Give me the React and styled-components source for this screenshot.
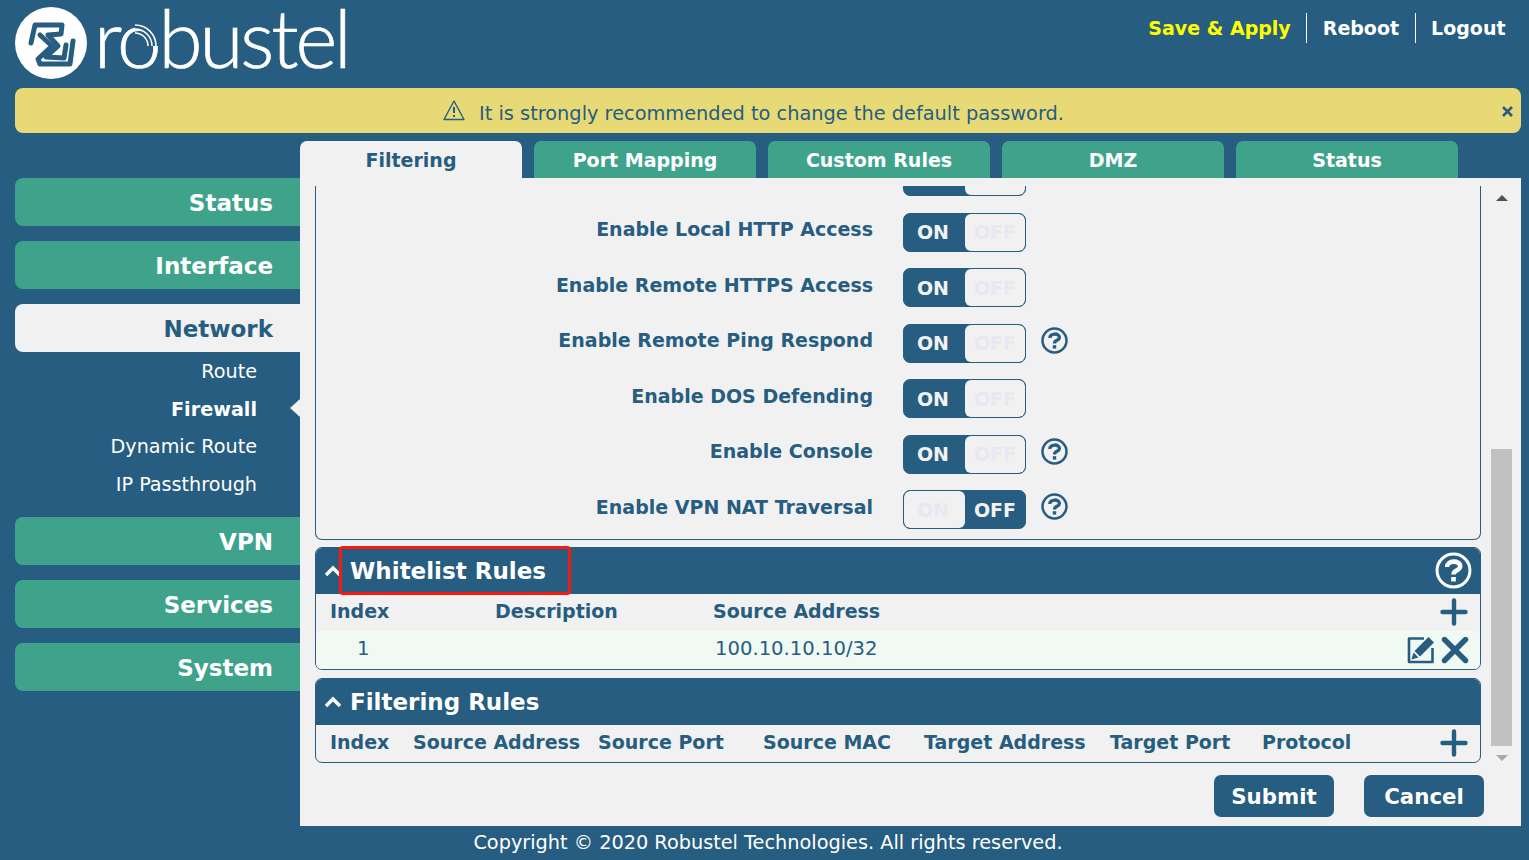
import React from 'react';
import styled, { createGlobalStyle } from 'styled-components';

const BLUE = '#265d80';
const TEAL = '#3fa38c';
const LIGHT = '#f1f1f1';

const GlobalStyle = createGlobalStyle`
  html, body {
    margin: 0;
    padding: 0;
    height: 100%;
    background: ${BLUE};
    font-family: "DejaVu Sans", Verdana, sans-serif;
    overflow: hidden;
  }
  * { box-sizing: border-box; }
`;

const Page = styled.div`
  width: 1529px;
  height: 860px;
  background: ${BLUE};
  display: flex;
  flex-direction: column;
  padding-left: 15px;
  padding-right: 8px;
`;

const Header = styled.header`
  height: 88px;
  display: flex;
  align-items: flex-start;
  justify-content: space-between;
`;

const Logo = styled.div`
  display: flex;
  align-items: flex-start;
  padding-top: 7px;
`;

const LogoWord = styled.div`
  position: relative;
  margin-left: 5px;
  margin-top: -18px;
  height: 88px;
  font-family: Lato, sans-serif;
  font-weight: 300;
  font-size: 80px;
  line-height: 96px;
  color: #fff;
  letter-spacing: -3.1px;
  -webkit-text-stroke: 0.7px #fff;
`;

const LogoWaves = styled.svg`
  position: absolute;
  left: 29px;
  top: 32px;
`;

const HeaderLinks = styled.nav`
  display: flex;
  align-items: center;
  margin-top: 13px;
`;

const HeaderLink = styled.a`
  height: 30px;
  line-height: 31px;
  padding: 0 15.5px;
  font-size: 19px;
  font-weight: 700;
  color: ${p => (p.$save ? '#ffff00' : '#fff')};
  border-left: ${p => (p.$save ? 'none' : '1px solid #fff')};
`;

const Banner = styled.div`
  position: relative;
  height: 45px;
  background: #e7da76;
  border-radius: 8px;
  display: flex;
  align-items: center;
  justify-content: center;
  gap: 14px;
  padding-top: 5px;
  padding-right: 29px;
  color: ${BLUE};
  font-size: 19.35px;
`;

const BannerIcon = styled.span`
  display: flex;
  margin-top: -6px;
`;

const BannerClose = styled.span`
  position: absolute;
  right: 7px;
  top: 17px;
  width: 13px;
  height: 13px;
  display: flex;
`;

const Tabs = styled.div`
  display: flex;
  gap: 12px;
  margin-top: 8px;
  padding-left: 285px;
`;

const Tab = styled.div`
  width: 222px;
  height: 37px;
  line-height: 38px;
  border-radius: 7px 7px 0 0;
  text-align: center;
  font-size: 19px;
  font-weight: 700;
  background: ${p => (p.$active ? LIGHT : TEAL)};
  color: ${p => (p.$active ? BLUE : '#fff')};
`;

const Body = styled.div`
  display: flex;
  height: 648px;
`;

const Sidebar = styled.aside`
  width: 285px;
  display: flex;
  flex-direction: column;
  gap: 15px;
`;

const MenuItem = styled.div`
  height: 48px;
  line-height: 51px;
  padding-right: 27px;
  text-align: right;
  border-radius: 8px 0 0 8px;
  font-size: 23px;
  font-weight: 700;
  background: ${p => (p.$active ? LIGHT : TEAL)};
  color: ${p => (p.$active ? BLUE : '#fff')};
`;

const SubMenu = styled.div`
  margin-top: -15px;
`;

const SubItem = styled.div`
  position: relative;
  height: 37.5px;
  line-height: 39px;
  padding-right: 43px;
  text-align: right;
  font-size: 19.2px;
  color: #fff;
  font-weight: ${p => (p.$active ? 700 : 400)};

  ${p => p.$active && `
    &::after {
      content: '';
      position: absolute;
      right: 0;
      top: 9px;
      border-style: solid;
      border-width: 9px 10px 9px 0;
      border-color: transparent ${LIGHT} transparent transparent;
    }
  `}
`;

const Content = styled.main`
  flex: 1;
  background: ${LIGHT};
  padding: 8px 9px 0 15px;
  display: flex;
  flex-direction: column;
`;

const ScrollRow = styled.div`
  display: flex;
  height: 585px;
`;

const Panels = styled.div`
  width: 1166px;
  overflow: hidden;
  display: flex;
  flex-direction: column;
  gap: 7px;
`;

const SettingsPanel = styled.section`
  flex: none;
  margin-top: -37px;
  padding-bottom: 1px;
  border: 1px solid ${BLUE};
  border-top: none;
  border-radius: 0 0 7px 7px;
`;

const Setting = styled.div`
  height: 55.5px;
  display: grid;
  grid-template-columns: 557px 123px 1fr;
  column-gap: 30px;
  align-items: center;
`;

const SettingLabel = styled.div`
  text-align: right;
  font-size: 19px;
  font-weight: 700;
  color: ${BLUE};
  margin-top: -6px;
`;

const Toggle = styled.div`
  width: 123px;
  height: 39px;
  display: flex;
  border: 1px solid ${BLUE};
  border-radius: 7px;
  background: ${BLUE};
  overflow: hidden;
  font-size: 19px;
  font-weight: 700;
`;

const ToggleSide = styled.div`
  height: 100%;
  display: flex;
  align-items: center;
  justify-content: center;
  flex: ${p => (p.$wide ? '0 0 61px' : '1')};
  padding-right: ${p => (p.$wide ? 3 : 0)}px;
  color: ${p => (p.$lit ? LIGHT : '#e8e8f3')};
  background: ${p => (p.$lit ? BLUE : LIGHT)};
  border-radius: ${p => (p.$lit ? '0' : '6px')};
`;

const HelpWrap = styled.div`
  margin-left: -15px;
  height: 27px;
  margin-top: -6px;
  display: flex;
`;

const Card = styled.section`
  flex: none;
  border: 1px solid ${BLUE};
  border-radius: 7px;
  overflow: hidden;
`;

const CardWrap = styled.div`
  position: relative;
  flex: none;
  margin-top: ${p => p.$mt || 0}px;
`;

const Highlight = styled.div`
  position: absolute;
  left: 24px;
  top: -1px;
  width: 232px;
  height: 49px;
  border: 3px solid #f5190f;
  border-radius: 4px;
`;

const CardHead = styled.div`
  height: 46px;
  display: flex;
  align-items: center;
  padding: 0 8px 0 8px;
  background: ${BLUE};
  color: #fff;
  font-size: 23px;
  font-weight: 700;
`;

const CardTitle = styled.span`
  flex: 1;
  margin-left: 8px;
`;

const TableRow = styled.div`
  display: grid;
  grid-template-columns: ${p => p.$cols};
  align-items: center;
  height: ${p => (p.$data ? 38 : 37)}px;
  padding-left: 14px;
  padding-right: 11px;
  color: ${BLUE};
  font-size: ${p => (p.$data ? '19.6px' : '19px')};
  font-weight: ${p => (p.$data ? 400 : 700)};
  background: ${p => (p.$data ? '#f1f9f3' : 'transparent')};
  border-radius: ${p => (p.$data ? '6px 6px 0 0' : '0')};
`;

const HeadCell = styled.span`
  margin-bottom: 3px;
`;

const IndexCell = styled.span`
  padding-left: 27px;
  margin-bottom: 2px;
`;

const AddressCell = styled.span`
  padding-left: 2px;
  margin-bottom: 2px;
`;

const RowIcons = styled.span`
  display: flex;
  justify-content: flex-end;
  align-items: center;
  gap: 6px;
  margin-right: ${p => (p.$add ? 1 : 0)}px;
`;

const Scrollbar = styled.div`
  width: 21px;
  margin-left: 10px;
  display: flex;
  flex-direction: column;
  align-items: center;
`;

const ScrollTrack = styled.div`
  flex: 1;
  width: 100%;
  padding-top: 238px;
`;

const ScrollThumb = styled.div`
  width: 100%;
  height: 297px;
  background: #c1c1c1;
`;

const ScrollArrow = styled.div`
  flex: none;
  height: 25px;
  display: flex;
  align-items: center;
  justify-content: center;

  &::before {
    content: '';
    border-left: 6px solid transparent;
    border-right: 6px solid transparent;
    ${p => (p.$down
      ? 'border-top: 6px solid #a8a8a8; margin-bottom: 2px;'
      : 'border-bottom: 6px solid #505050; margin-bottom: 1px;')}
  }
`;

const Actions = styled.div`
  display: flex;
  justify-content: flex-end;
  gap: 30px;
  margin-top: 4px;
  margin-right: 28px;
`;

const Button = styled.button`
  width: 120px;
  height: 42px;
  border: none;
  border-radius: 7px;
  background: ${BLUE};
  color: #fff;
  font-family: inherit;
  font-size: 21.3px;
  font-weight: 700;
  padding: 0;
`;

const Footer = styled.footer`
  flex: 1;
  text-align: center;
  color: #fff;
  font-size: 19.3px;
  line-height: 33px;
`;

const LogoMark = () => (
  <svg width="74" height="74" viewBox="0 0 74 74">
    <circle cx="36" cy="36" r="36" fill="#fff" />
    <g fill="none" stroke={BLUE} strokeWidth="5" strokeLinejoin="round" strokeLinecap="round">
      <path d="M16 36 L20 18 L47 18 L46 27 L33 28 L43 39 L31 50 L49 51 L51 38" />
      <path d="M58 34 L55 57 L25 57 L23 52 L37 39 L25 28" />
    </g>
  </svg>
);

const WarningIcon = () => (
  <svg width="22" height="22" viewBox="0 0 22 22" fill="none" stroke={BLUE}>
    <path d="M11 2 L21 20.5 H1 Z" strokeWidth="1.4" strokeLinejoin="round" />
    <path d="M11 8 V14" strokeWidth="2" />
    <path d="M11 16 V18" strokeWidth="2" />
  </svg>
);

const CloseSmall = () => (
  <svg width="13" height="13" viewBox="0 0 13 13" stroke={BLUE} strokeWidth="2.6">
    <path d="M2 2 L11 11 M11 2 L2 11" />
  </svg>
);

const HelpIcon = ({ size = 27, color = BLUE, weight = 2.5 }) => (
  <svg width={size} height={size} viewBox="0 0 27 27" fill="none" stroke={color}>
    <circle cx="13.5" cy="13.5" r="12" strokeWidth={weight} />
    <path d="M8.8 11 C8.8 5.8 18.4 5.8 18.4 10.4 C18.4 13.6 13.5 13 13.5 16.4" strokeWidth="3.3" />
    <path d="M13.5 18.2 V21.6" strokeWidth="3.4" />
  </svg>
);

const Chevron = () => (
  <svg width="18" height="12" viewBox="0 0 18 12" fill="none" stroke="#fff" strokeWidth="3.4">
    <path d="M2 10 L9 3 L16 10" />
  </svg>
);

const PlusIcon = () => (
  <svg width="28" height="28" viewBox="0 0 28 28" stroke={BLUE} strokeWidth="4.4" strokeLinecap="round">
    <path d="M14 2.5 V25.5 M2.5 14 H25.5" />
  </svg>
);

const EditIcon = () => (
  <svg width="28" height="28" viewBox="0 0 28 28" fill="none">
    <path d="M17 2.5 H2 V26 H25.5 V12" stroke={BLUE} strokeWidth="2.6" strokeLinejoin="round" />
    <path d="M21.5 1 L27 6.5 L13 20.5 L7.5 15 Z" fill={BLUE} />
    <path d="M6.5 16.5 L11.5 21.5 L4.5 23.5 Z" fill={BLUE} />
  </svg>
);

const CrossIcon = () => (
  <svg width="28" height="28" viewBox="0 0 28 28" stroke={BLUE} strokeWidth="5.4" strokeLinecap="round">
    <path d="M3.5 3.5 L24.5 24.5 M24.5 3.5 L3.5 24.5" />
  </svg>
);

const settings = [
  { label: 'Enable Local HTTPS Access', on: true },
  { label: 'Enable Local HTTP Access', on: true },
  { label: 'Enable Remote HTTPS Access', on: true },
  { label: 'Enable Remote Ping Respond', on: true, help: true },
  { label: 'Enable DOS Defending', on: true },
  { label: 'Enable Console', on: true, help: true },
  { label: 'Enable VPN NAT Traversal', on: false, help: true },
];

const WHITELIST_COLS = '165px 218px 1fr 72px';
const FILTER_COLS = '83px 185px 165px 161px 186px 152px 1fr 40px';

const App = () => (
  <Page>
    <GlobalStyle />
    <Header>
      <Logo>
        <LogoMark />
        <LogoWord>
          robustel
          <LogoWaves width="38" height="34" viewBox="0 0 38 34" fill="none" strokeWidth="1.5">
            <path d="M12 4 A21 21 0 0 1 33 25" stroke={BLUE} strokeWidth="8" />
            <path d="M12 4 A21 21 0 0 1 33 25" stroke="#fff" />
            <path d="M12 8 A17 17 0 0 1 29 25" stroke="#fff" />
            <path d="M12 12 A13 13 0 0 1 25 25" stroke="#fff" />
          </LogoWaves>
        </LogoWord>
      </Logo>
      <HeaderLinks>
        <HeaderLink $save>Save &amp; Apply</HeaderLink>
        <HeaderLink>Reboot</HeaderLink>
        <HeaderLink>Logout</HeaderLink>
      </HeaderLinks>
    </Header>

    <Banner>
      <BannerIcon><WarningIcon /></BannerIcon>
      It is strongly recommended to change the default password.
      <BannerClose><CloseSmall /></BannerClose>
    </Banner>

    <Tabs>
      <Tab $active>Filtering</Tab>
      <Tab>Port Mapping</Tab>
      <Tab>Custom Rules</Tab>
      <Tab>DMZ</Tab>
      <Tab>Status</Tab>
    </Tabs>

    <Body>
      <Sidebar>
        <MenuItem>Status</MenuItem>
        <MenuItem>Interface</MenuItem>
        <MenuItem $active>Network</MenuItem>
        <SubMenu>
          <SubItem>Route</SubItem>
          <SubItem $active>Firewall</SubItem>
          <SubItem>Dynamic Route</SubItem>
          <SubItem>IP Passthrough</SubItem>
        </SubMenu>
        <MenuItem>VPN</MenuItem>
        <MenuItem>Services</MenuItem>
        <MenuItem>System</MenuItem>
      </Sidebar>

      <Content>
        <ScrollRow>
          <Panels>
            <SettingsPanel>
              {settings.map(item => (
                <Setting key={item.label}>
                  <SettingLabel>{item.label}</SettingLabel>
                  <Toggle>
                    <ToggleSide $wide $lit={item.on}>ON</ToggleSide>
                    <ToggleSide $lit={!item.on}>OFF</ToggleSide>
                  </Toggle>
                  {item.help && <HelpWrap><HelpIcon /></HelpWrap>}
                </Setting>
              ))}
            </SettingsPanel>

            <CardWrap>
              <Card>
                <CardHead>
                  <Chevron />
                  <CardTitle>Whitelist Rules</CardTitle>
                  <HelpIcon size={37} color="#fff" weight={2.2} />
                </CardHead>
                <TableRow $cols={WHITELIST_COLS}>
                  <HeadCell>Index</HeadCell>
                  <HeadCell>Description</HeadCell>
                  <HeadCell>Source Address</HeadCell>
                  <RowIcons $add><PlusIcon /></RowIcons>
                </TableRow>
                <TableRow $data $cols={WHITELIST_COLS}>
                  <IndexCell>1</IndexCell>
                  <span />
                  <AddressCell>100.10.10.10/32</AddressCell>
                  <RowIcons><EditIcon /><CrossIcon /></RowIcons>
                </TableRow>
              </Card>
              <Highlight />
            </CardWrap>

            <CardWrap $mt={1}>
              <Card>
                <CardHead>
                  <Chevron />
                  <CardTitle>Filtering Rules</CardTitle>
                </CardHead>
                <TableRow $cols={FILTER_COLS}>
                  <HeadCell>Index</HeadCell>
                  <HeadCell>Source Address</HeadCell>
                  <HeadCell>Source Port</HeadCell>
                  <HeadCell>Source MAC</HeadCell>
                  <HeadCell>Target Address</HeadCell>
                  <HeadCell>Target Port</HeadCell>
                  <HeadCell>Protocol</HeadCell>
                  <RowIcons $add><PlusIcon /></RowIcons>
                </TableRow>
              </Card>
            </CardWrap>
          </Panels>

          <Scrollbar>
            <ScrollArrow />
            <ScrollTrack><ScrollThumb /></ScrollTrack>
            <ScrollArrow $down />
          </Scrollbar>
        </ScrollRow>
        <Actions>
          <Button>Submit</Button>
          <Button>Cancel</Button>
        </Actions>
      </Content>
    </Body>

    <Footer>Copyright © 2020 Robustel Technologies. All rights reserved.</Footer>
  </Page>
);

export default App;
